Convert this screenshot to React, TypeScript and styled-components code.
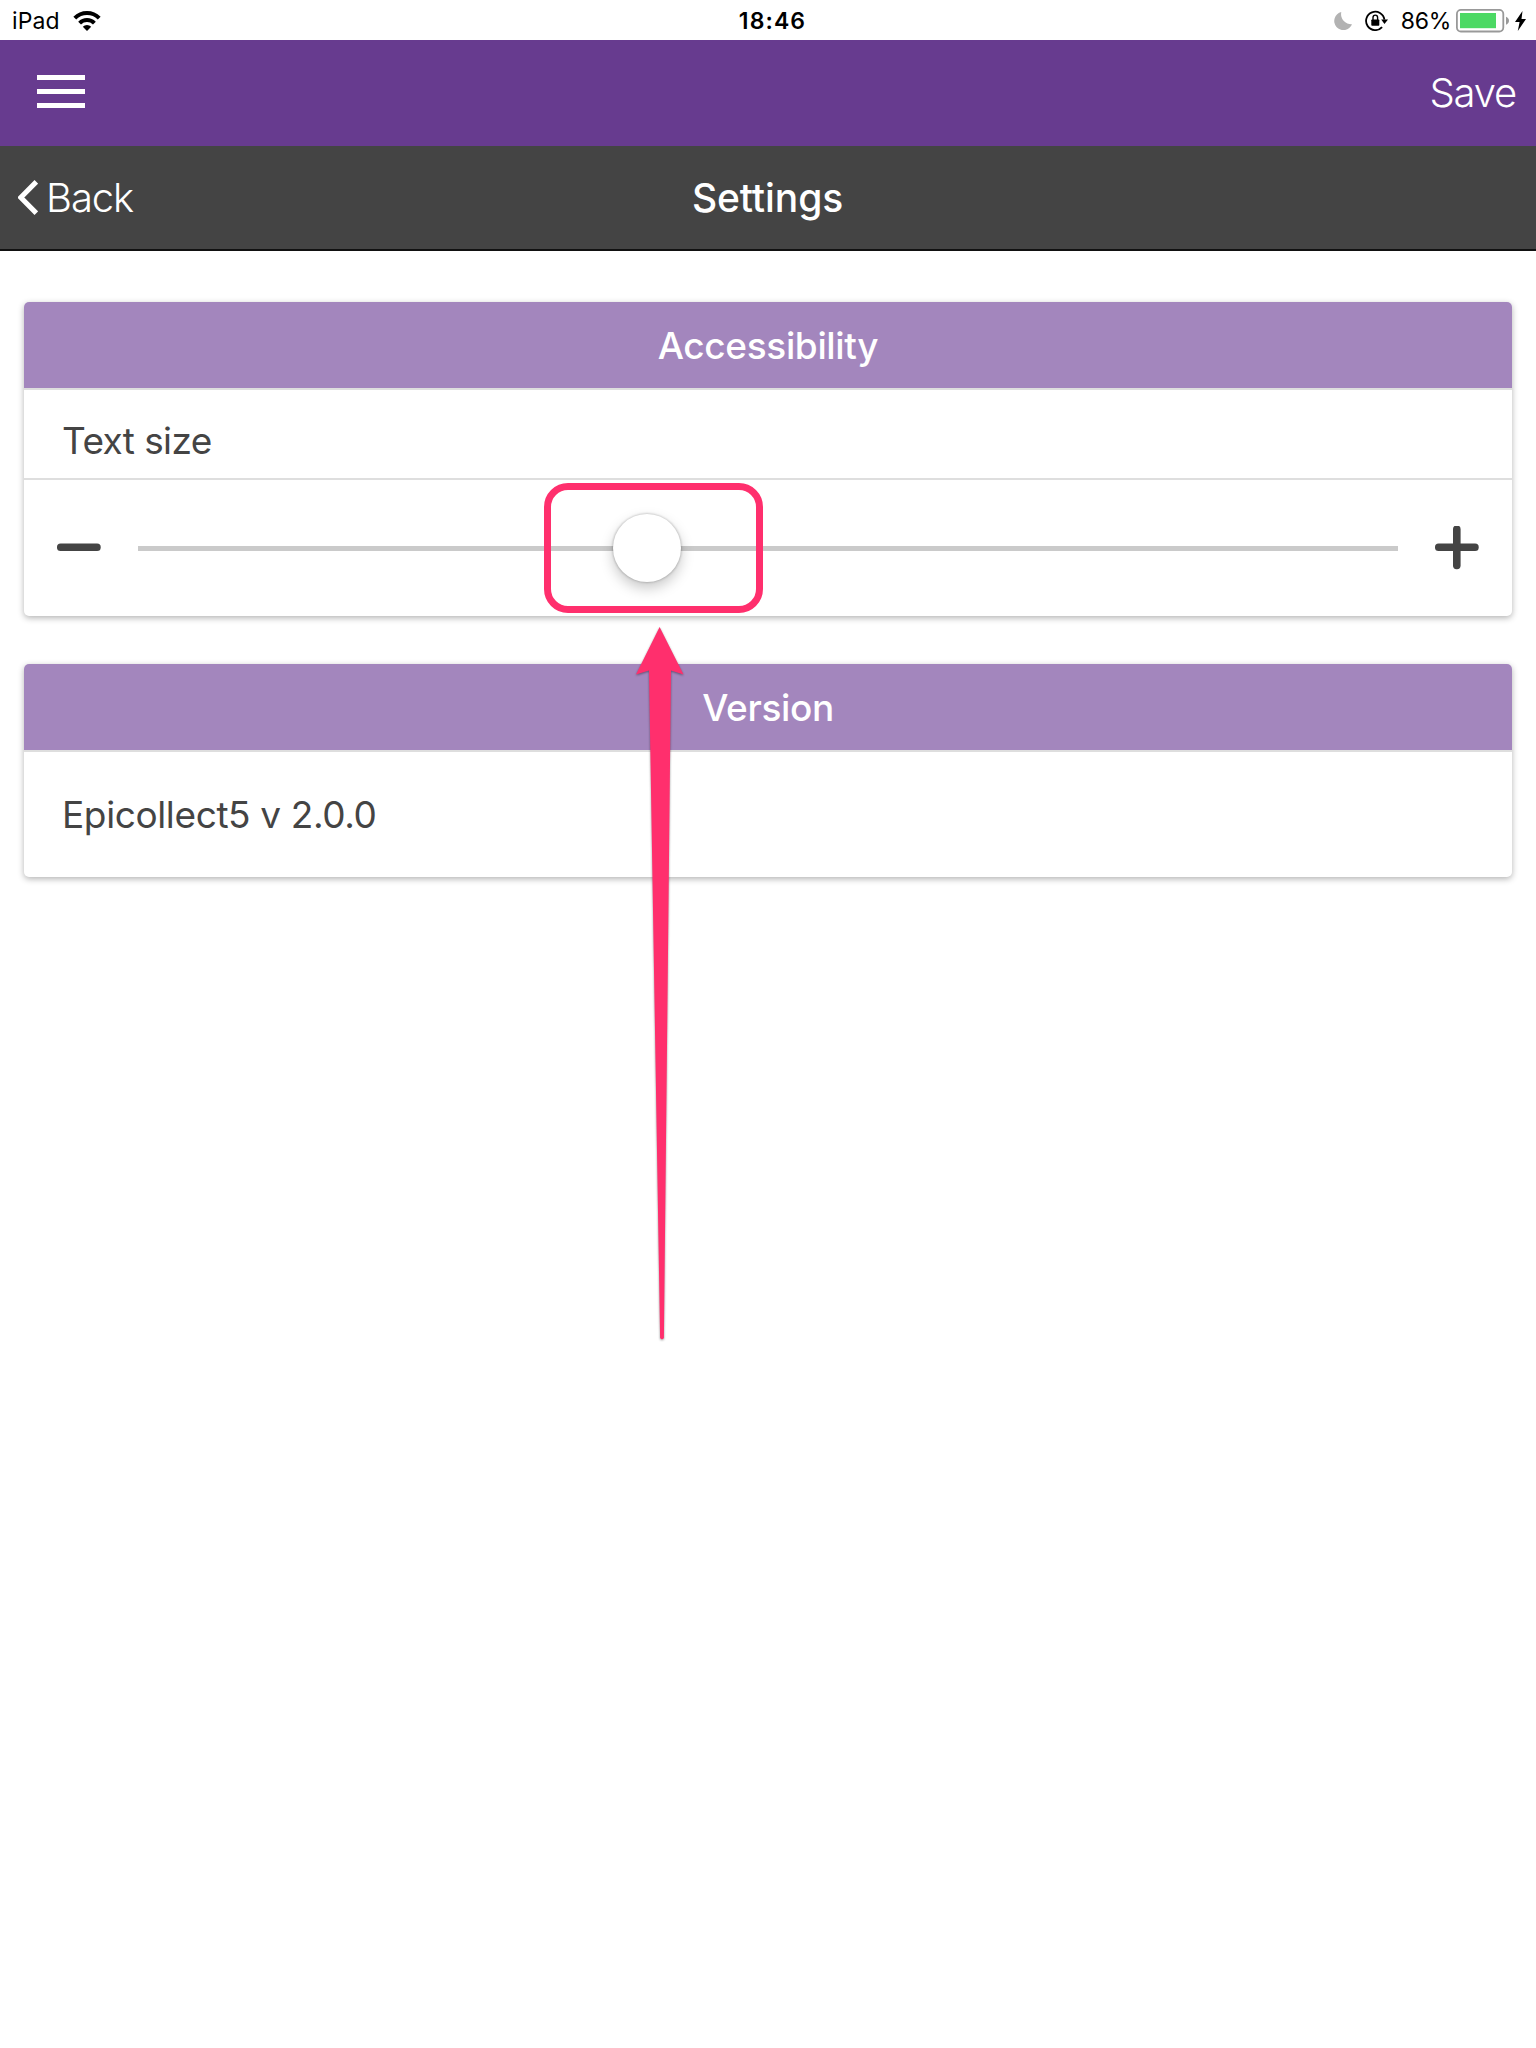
import React from "react";
import styled, { createGlobalStyle } from "styled-components";

const GlobalStyle = createGlobalStyle`
  * { box-sizing: border-box; }
  body { margin: 0; background: #fff; font-family: Inter, "Liberation Sans", sans-serif; }
`;

const Screen = styled.div`
  position: relative;
  width: 1536px;
  height: 2048px;
  overflow: hidden;
  background: #fff;
`;

const StatusBar = styled.header`
  display: grid;
  grid-template-columns: 1fr auto 1fr;
  align-items: center;
  height: 40px;
  padding: 1px 10px 0 12px;
  font-size: 23px;
  line-height: 28px;
  color: #000;
`;

const StatusGroup = styled.div<{ $end?: boolean }>`
  display: flex;
  align-items: center;
  justify-content: ${(p) => (p.$end ? "flex-end" : "flex-start")};
`;

const StatusText = styled.span<{ $spacing?: number; $right?: number }>`
  letter-spacing: ${(p) => p.$spacing ?? 0}px;
  margin-right: ${(p) => p.$right ?? 0}px;
`;

const Clock = styled.time`
  font-weight: 600;
  letter-spacing: 1.1px;
  padding-left: 7px;
`;

const Glyph = styled.svg<{ $right?: number }>`
  display: block;
  flex: none;
  margin-right: ${(p) => p.$right ?? 0}px;
`;

const NavBar = styled.nav`
  display: flex;
  align-items: center;
  justify-content: space-between;
  height: 106px;
  padding: 0 20px 0 37px;
  background: #673b8f;
`;

const MenuButton = styled.button`
  display: flex;
  flex-direction: column;
  gap: 9px;
  width: 48px;
  padding: 0;
  margin-bottom: 4px;
  border: 0;
  background: none;
`;

const MenuLine = styled.span`
  height: 5px;
  background: #fff;
`;

const BarButton = styled.button<{ $spacing: number }>`
  display: flex;
  align-items: center;
  padding: 0;
  border: 0;
  background: none;
  color: #fff;
  font: 300 40px/48px Inter, "Liberation Sans", sans-serif;
  letter-spacing: ${(p) => p.$spacing}px;
`;

const TitleBar = styled.div`
  display: grid;
  grid-template-columns: 1fr auto 1fr;
  align-items: center;
  height: 105px;
  padding: 0 19px 0 18px;
  border-bottom: 2px solid #111;
  background: #444;
`;

const Title = styled.h1`
  margin: 0;
  color: #fff;
  font-size: 39px;
  font-weight: 500;
  line-height: 48px;
  letter-spacing: -0.1px;
`;

const Content = styled.main`
  display: flex;
  flex-direction: column;
  gap: 48px;
  padding: 51px 24px;
`;

const Card = styled.section`
  overflow: hidden;
  border-radius: 5px;
  background: #fff;
  box-shadow: 0 2px 6px rgba(0, 0, 0, 0.3);
`;

const CardHeader = styled.h2`
  display: flex;
  align-items: center;
  justify-content: center;
  height: 88px;
  margin: 0;
  padding-top: 1px;
  border-bottom: 2px solid #dedede;
  background: #a386bd;
  color: #fff;
  font-size: 37px;
  font-weight: 500;
  letter-spacing: -0.35px;
`;

const LabelRow = styled.div`
  display: flex;
  align-items: center;
  height: 90px;
  padding: 13px 38px 0;
  border-bottom: 2px solid #dedede;
  color: #444;
  font-size: 37px;
  letter-spacing: -0.6px;
`;

const VersionRow = styled.div`
  display: flex;
  align-items: center;
  height: 125px;
  padding: 0 38px;
  color: #444;
  font-size: 37px;
  letter-spacing: -0.38px;
`;

const SliderRow = styled.div`
  display: flex;
  align-items: center;
  justify-content: space-between;
  height: 136px;
  padding: 0 33px;
`;

const Track = styled.div`
  position: relative;
  width: 1260px;
  height: 5px;
  margin-top: 1px;
  background: #cacaca;
`;

const Thumb = styled.span`
  position: absolute;
  left: 475px;
  top: -32px;
  width: 68px;
  height: 68px;
  border-radius: 50%;
  background: #fff;
  box-shadow: 0 0 2px 1px rgba(0, 0, 0, 0.16), 0 6px 14px rgba(0, 0, 0, 0.22);
`;

const Highlight = styled.div`
  position: absolute;
  left: 544px;
  top: 483px;
  width: 219px;
  height: 130px;
  border: 7px solid #ff2f6d;
  border-radius: 24px;
`;

const Arrow = styled.svg`
  position: absolute;
  left: 628px;
  top: 620px;
  filter: drop-shadow(0 1px 1px rgba(0, 0, 0, 0.4));
`;

const Wifi = () => (
  <Glyph width="28" height="20" viewBox="0 0 28 20" fill="none" stroke="#000">
    <path d="M1.8 7.2a17.2 17.2 0 0 1 24.4 0" strokeWidth="4" />
    <path d="M6.6 12.1a10.5 10.5 0 0 1 14.8 0" strokeWidth="4" />
    <path d="M9.8 15.7a5.8 5.8 0 0 1 8.4 0L14 20z" fill="#000" stroke="none" />
  </Glyph>
);

const Moon = () => (
  <Glyph $right={13} width="18" height="18" viewBox="0 0 18 18">
    <path d="M7.3 0A10.2 10.2 0 0 0 18 12.3 9.2 9.2 0 1 1 7.3 0z" fill="#b2b2b2" />
  </Glyph>
);

const RotationLock = () => (
  <Glyph $right={13} width="23" height="21" viewBox="0 0 23 21">
    <path d="M17.1 17.1A9.2 9.2 0 1 1 19.4 9.7" fill="none" stroke="#000" strokeWidth="1.8" />
    <path d="M16.2 9.4H23L19.5 14z" />
    <rect x="6.3" y="9.5" width="8" height="6.2" rx="0.8" />
    <path d="M8 10V7.4a2.3 2.3 0 0 1 4.6 0V10" fill="none" stroke="#000" strokeWidth="1.4" />
  </Glyph>
);

const Battery = () => (
  <Glyph $right={6} width="53" height="24" viewBox="0 0 53 24">
    <rect x="0.9" y="0.9" width="46.4" height="21.6" rx="4" fill="none" stroke="#999" strokeWidth="1.8" />
    <rect x="4" y="4" width="36" height="15.2" fill="#4cd964" />
    <path d="M50 7.7c4 1.6 4 6.4 0 8z" fill="#999" />
  </Glyph>
);

const Bolt = () => (
  <Glyph width="11" height="20" viewBox="0 0 11 20">
    <path d="M7.5 0L0 11h4.6L2.8 20 11 8H6.5z" />
  </Glyph>
);

const BackChevron = () => (
  <Glyph $right={8} width="20" height="35" viewBox="0 0 20 35">
    <path d="M18.3 1.8L2.8 17.5 18.3 33.2" fill="none" stroke="#fff" strokeWidth="5" />
  </Glyph>
);

const Minus = () => (
  <Glyph width="44" height="44" viewBox="0 0 44 44">
    <rect y="17.5" width="43.7" height="7.6" rx="3.6" fill="#444" />
  </Glyph>
);

const Plus = () => (
  <Glyph width="44" height="44" viewBox="0 0 44 44" fill="#444">
    <rect x="0" y="17.5" width="43.7" height="7.6" rx="3.6" />
    <rect x="18" y="-0.5" width="7.6" height="43.7" rx="3.6" />
  </Glyph>
);

export default function App() {
  return (
    <Screen>
      <GlobalStyle />
      <StatusBar>
        <StatusGroup>
          <StatusText $right={13} $spacing={0.15}>iPad</StatusText>
          <Wifi />
        </StatusGroup>
        <Clock>18:46</Clock>
        <StatusGroup $end>
          <Moon />
          <RotationLock />
          <StatusText $right={5} $spacing={-0.3}>86%</StatusText>
          <Battery />
          <Bolt />
        </StatusGroup>
      </StatusBar>
      <NavBar>
        <MenuButton aria-label="Menu">
          <MenuLine />
          <MenuLine />
          <MenuLine />
        </MenuButton>
        <BarButton $spacing={-1.2}>Save</BarButton>
      </NavBar>
      <TitleBar>
        <BarButton $spacing={-1.1}>
          <BackChevron />
          Back
        </BarButton>
        <Title>Settings</Title>
      </TitleBar>
      <Content>
        <Card>
          <CardHeader>Accessibility</CardHeader>
          <LabelRow>Text size</LabelRow>
          <SliderRow>
            <Minus />
            <Track>
              <Thumb />
            </Track>
            <Plus />
          </SliderRow>
        </Card>
        <Card>
          <CardHeader>Version</CardHeader>
          <VersionRow>Epicollect5 v 2.0.0</VersionRow>
        </Card>
      </Content>
      <Highlight />
      <Arrow width="64" height="724" viewBox="0 0 64 724">
        <path
          d="M31.6 7L55.5 54.5 43 50.5 35.9 718Q34 720.5 32.1 718L21 50.5 8 54.5z"
          fill="#ff2f6d"
        />
      </Arrow>
    </Screen>
  );
}
